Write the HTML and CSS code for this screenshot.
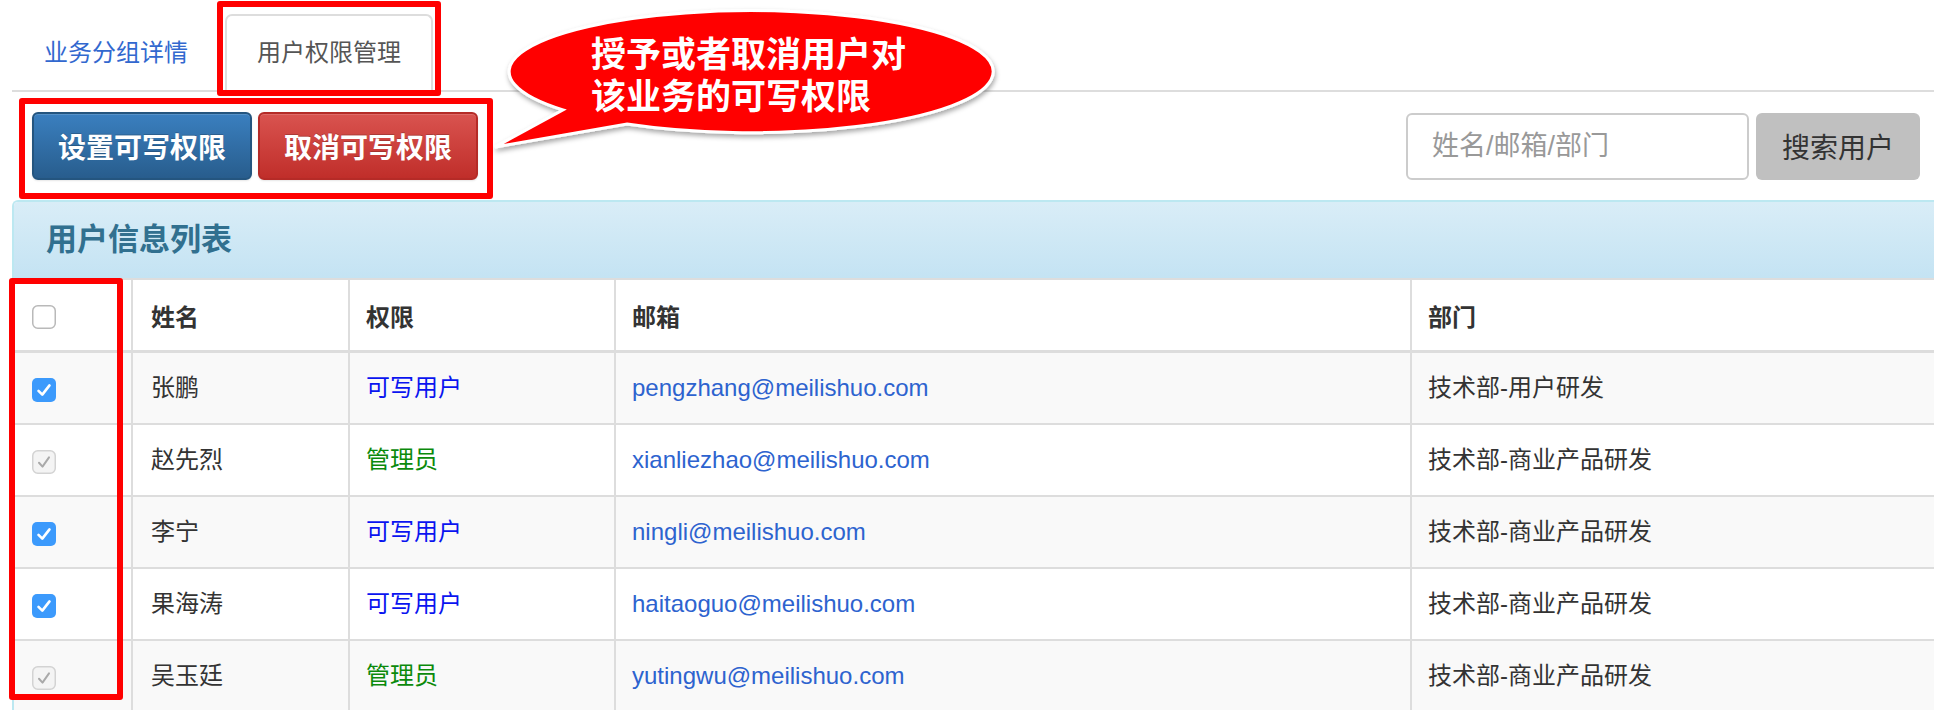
FILE: index.html
```html
<!DOCTYPE html>
<html lang="zh-CN">
<head>
<meta charset="utf-8">
<title>用户权限管理</title>
<link rel="stylesheet" href="styles.css">
</head>
<body>
<div class="page">
  <ul class="tabs">
    <li class="tab"><a href="#">业务分组详情</a></li>
    <li class="tab active"><a href="#">用户权限管理</a></li>
  </ul>

  <div class="toolbar">
    <div class="actions">
      <button class="btn btn-primary" type="button">设置可写权限</button>
      <button class="btn btn-danger" type="button">取消可写权限</button>
    </div>
    <div class="search">
      <input class="search-input" type="text" placeholder="姓名/邮箱/部门">
      <button class="btn btn-search" type="button">搜索用户</button>
    </div>
  </div>

  <div class="panel">
    <div class="panel-heading">用户信息列表</div>
    <table class="users">
      <colgroup>
        <col class="c-check">
        <col class="c-name">
        <col class="c-role">
        <col class="c-mail">
        <col class="c-dept">
      </colgroup>
      <thead>
        <tr>
          <th class="cell-check"><span class="cb cb-empty"><svg viewBox="0 0 24 24" width="24" height="24"><rect x="0.75" y="0.75" width="22.5" height="22.5" rx="5" fill="#fff" stroke="#b9b9b9" stroke-width="1.5"/></svg></span></th>
          <th class="cell-name">姓名</th>
          <th>权限</th>
          <th>邮箱</th>
          <th>部门</th>
        </tr>
      </thead>
      <tbody>
        <tr>
          <td class="cell-check"><span class="cb"><svg viewBox="0 0 24 24" width="24" height="24"><rect width="24" height="24" rx="5" fill="#3c9afc"/><path d="M6.5 12.8 L10.3 16.6 L17.5 7.4" fill="none" stroke="#fff" stroke-width="2.6" stroke-linecap="round" stroke-linejoin="round"/></svg></span></td>
          <td class="cell-name zh">张鹏</td>
          <td class="role-write zh">可写用户</td>
          <td><a class="mail" href="#">pengzhang@meilishuo.com</a></td>
          <td class="zh">技术部-用户研发</td>
        </tr>
        <tr>
          <td class="cell-check"><span class="cb"><svg viewBox="0 0 24 24" width="24" height="24"><rect x="0.75" y="0.75" width="22.5" height="22.5" rx="5" fill="#f4f4f4" stroke="#d3d3d3" stroke-width="1.5"/><path d="M7 12.8 L10.5 16.6 L17 7.4" fill="none" stroke="#a9a9a9" stroke-width="2" stroke-linecap="round" stroke-linejoin="round"/></svg></span></td>
          <td class="cell-name zh">赵先烈</td>
          <td class="role-admin zh">管理员</td>
          <td><a class="mail" href="#">xianliezhao@meilishuo.com</a></td>
          <td class="zh">技术部-商业产品研发</td>
        </tr>
        <tr>
          <td class="cell-check"><span class="cb"><svg viewBox="0 0 24 24" width="24" height="24"><rect width="24" height="24" rx="5" fill="#3c9afc"/><path d="M6.5 12.8 L10.3 16.6 L17.5 7.4" fill="none" stroke="#fff" stroke-width="2.6" stroke-linecap="round" stroke-linejoin="round"/></svg></span></td>
          <td class="cell-name zh">李宁</td>
          <td class="role-write zh">可写用户</td>
          <td><a class="mail" href="#">ningli@meilishuo.com</a></td>
          <td class="zh">技术部-商业产品研发</td>
        </tr>
        <tr>
          <td class="cell-check"><span class="cb"><svg viewBox="0 0 24 24" width="24" height="24"><rect width="24" height="24" rx="5" fill="#3c9afc"/><path d="M6.5 12.8 L10.3 16.6 L17.5 7.4" fill="none" stroke="#fff" stroke-width="2.6" stroke-linecap="round" stroke-linejoin="round"/></svg></span></td>
          <td class="cell-name zh">果海涛</td>
          <td class="role-write zh">可写用户</td>
          <td><a class="mail" href="#">haitaoguo@meilishuo.com</a></td>
          <td class="zh">技术部-商业产品研发</td>
        </tr>
        <tr>
          <td class="cell-check"><span class="cb"><svg viewBox="0 0 24 24" width="24" height="24"><rect x="0.75" y="0.75" width="22.5" height="22.5" rx="5" fill="#f4f4f4" stroke="#d3d3d3" stroke-width="1.5"/><path d="M7 12.8 L10.5 16.6 L17 7.4" fill="none" stroke="#a9a9a9" stroke-width="2" stroke-linecap="round" stroke-linejoin="round"/></svg></span></td>
          <td class="cell-name zh">吴玉廷</td>
          <td class="role-admin zh">管理员</td>
          <td><a class="mail" href="#">yutingwu@meilishuo.com</a></td>
          <td class="zh">技术部-商业产品研发</td>
        </tr>
      </tbody>
    </table>
  </div>

  <div class="mark mark-tab"></div>
  <div class="mark mark-buttons"></div>
  <div class="mark mark-checks"></div>

  <div class="callout">
    <svg class="callout-shape" viewBox="0 0 530 160" width="530" height="160">
      <defs>
        <filter id="shadow" x="-10%" y="-20%" width="120%" height="150%">
          <feDropShadow dx="1" dy="3" stdDeviation="2.5" flood-color="#000" flood-opacity="0.35"/>
        </filter>
      </defs>
      <path d="M83 110 A242 61 0 1 1 147 124 L15 147 Z" fill="#ff0000" stroke="#fff" stroke-width="3" stroke-linejoin="miter" filter="url(#shadow)"/>
    </svg>
    <div class="callout-text">
      <div class="callout-line">授予或者取消用户对</div>
      <div class="callout-line">该业务的可写权限</div>
    </div>
  </div>
</div>
</body>
</html>
```

FILE: styles.css
```css
* {
  box-sizing: border-box;
}

html, body {
  margin: 0;
  padding: 0;
  background: #fff;
  overflow: hidden;
}

body {
  font-family: "Liberation Sans", "Noto Sans CJK SC", sans-serif;
  font-size: 24px;
  color: #333;
}

.page {
  position: relative;
  padding-left: 12px;
}

/* Tabs */
.tabs {
  display: flex;
  gap: 5px;
  list-style: none;
  margin: 0;
  padding: 14px 0 0;
  border-bottom: 2px solid #ddd;
}

.tab a {
  display: block;
  height: 76px;
  line-height: 74px;
  padding: 0 30px;
  border: 2px solid transparent;
  border-bottom: 0;
  border-radius: 7px 7px 0 0;
  margin-bottom: -2px;
  font-size: 24px;
  color: #3268cf;
  text-decoration: none;
}

.tab.active a {
  color: #555;
  background: #fff;
  border-color: #ddd;
  height: 78px;
}

/* Toolbar */
.toolbar {
  display: flex;
  justify-content: space-between;
  align-items: center;
  padding: 20px 14px 0 20px;
  margin-bottom: 20px;
}

.actions {
  display: flex;
  gap: 6px;
}

.btn {
  height: 68px;
  border-radius: 6px;
  font-family: "Liberation Sans", "Noto Sans CJK SC", sans-serif;
  font-size: 28px;
  cursor: pointer;
}

.btn-primary,
.btn-danger {
  width: 220px;
  padding: 0;
  font-weight: 700;
  color: #fff;
  text-shadow: 0 -1px 0 rgba(0, 0, 0, 0.2);
  box-shadow: inset 0 1px 0 rgba(255, 255, 255, 0.15), 0 1px 2px rgba(0, 0, 0, 0.1);
}

.btn-primary {
  background: linear-gradient(#3a7fbf, #285d8d);
  border: 2px solid #24557f;
}

.btn-danger {
  background: linear-gradient(#d9534f, #c02e2a);
  border: 2px solid #b52b27;
}

.search {
  display: flex;
  gap: 7px;
  align-items: center;
}

.search-input {
  width: 343px;
  height: 67px;
  padding: 0 24px;
  border: 2px solid #ccc;
  border-radius: 6px;
  font-family: "Liberation Sans", "Noto Sans CJK SC", sans-serif;
  font-size: 27px;
  color: #555;
  outline: none;
}

.search-input::placeholder {
  color: #999;
}

.btn-search {
  width: 164px;
  height: 67px;
  padding: 0;
  background: #c0c0c0;
  border: 0;
  color: #333;
}

/* Panel */
.panel {
  border: 2px solid #bce8f1;
  border-right: 0;
  border-bottom: 0;
  border-radius: 6px 0 0 0;
  overflow: hidden;
}

.panel-heading {
  height: 76px;
  line-height: 76px;
  padding-left: 32px;
  background: linear-gradient(#d9edf7, #c4e3f3);
  color: #31708f;
  font-size: 31px;
  font-weight: 700;
}

/* Table */
.users {
  width: 100%;
  table-layout: fixed;
  border-collapse: separate;
  border-spacing: 0;
  border-top: 2px solid #ddd;
}

.c-check { width: 117px; }
.c-name { width: 217px; }
.c-role { width: 266px; }
.c-mail { width: 796px; }

.users th,
.users td {
  padding: 0 16px;
  text-align: left;
  vertical-align: middle;
  border-left: 2px solid #ddd;
  white-space: nowrap;
}

.users th {
  height: 73px;
  font-weight: 700;
  color: #333;
  border-bottom: 3px solid #ddd;
  background: #fff;
}

.users td {
  height: 72px;
  border-bottom: 2px solid #ddd;
  background: #fff;
}

.users td.zh {
  padding-bottom: 6px;
}

.users tbody tr:nth-child(odd) td {
  background: #f9f9f9;
}

.users .cell-check {
  border-left: 0;
  padding-left: 18px;
}

.users .cell-name {
  padding-left: 18px;
}

.cb {
  display: inline-block;
  width: 24px;
  height: 24px;
  vertical-align: middle;
  margin-top: 2px;
}

.cb svg {
  display: block;
}

.role-write {
  color: #0a14f0;
}

.role-admin {
  color: #0b8a0b;
}

.mail {
  color: #2d63cf;
  text-decoration: none;
}

/* Annotations */
.mark {
  position: absolute;
  border: 6px solid #ff0000;
  border-radius: 3px;
  pointer-events: none;
}

.mark-tab {
  left: 217px;
  top: 1px;
  width: 224px;
  height: 95px;
}

.mark-buttons {
  left: 19px;
  top: 98px;
  width: 474px;
  height: 101px;
}

.mark-checks {
  left: 9px;
  top: 278px;
  width: 114px;
  height: 422px;
}

.callout {
  position: absolute;
  left: 480px;
  top: 0;
  width: 530px;
  height: 160px;
  pointer-events: none;
}

.callout-shape {
  display: block;
}

.callout-text {
  position: absolute;
  left: 111px;
  top: 35px;
  font-family: "Liberation Sans", "Noto Sans CJK SC", sans-serif;
  font-size: 35px;
  font-weight: 700;
  color: #fff;
  white-space: nowrap;
}

.callout-line {
  height: 42px;
  line-height: 40px;
}
```
